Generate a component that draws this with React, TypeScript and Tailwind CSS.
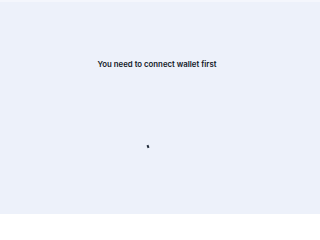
export default function App() {
  return (
    <div className="w-[320px] h-[214px] bg-[#f4f6fc] pt-[2px] overflow-hidden">
      <div className="h-full bg-[#edf1fa] flex flex-col items-center">
        <p
          className="mt-[57px] mr-[6px] text-[7.8px] font-semibold text-[#111827] leading-[11px]"
          style={{ fontFamily: 'Inter, sans-serif' }}
        >
          You need to connect wallet first
        </p>
        <div className="mt-[75px] ml-[-25px] w-[2px] h-[3px] bg-[#1f2937] rotate-[-20deg]" />
      </div>
    </div>
  );
}
